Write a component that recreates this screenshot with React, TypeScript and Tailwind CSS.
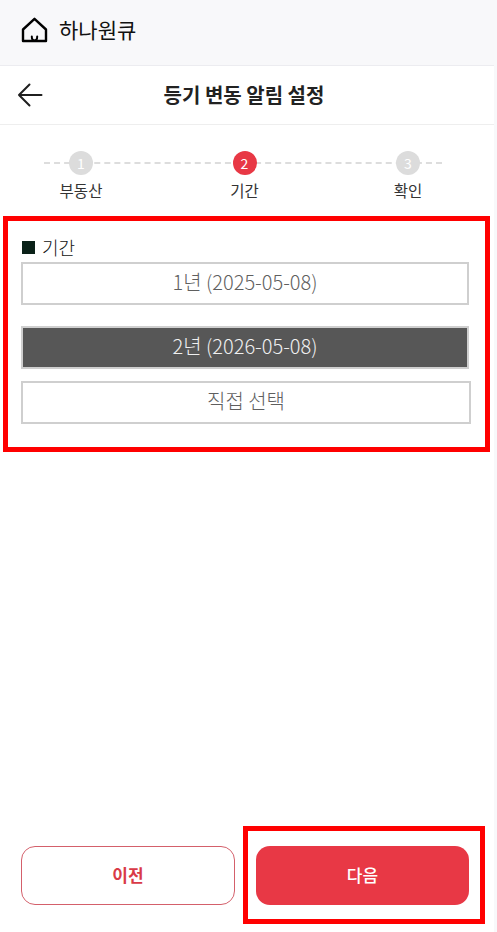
import React from 'react';

const font = 'font-["Noto_Sans_CJK_KR","Noto_Sans",sans-serif]';

function HomeIcon() {
  return (
    <svg width="27" height="26" viewBox="0 0 27 26" fill="none" stroke="#000" strokeWidth="2.4" strokeLinejoin="round" strokeLinecap="round">
      <path d="M2 12.5 13.5 1.8 25 12.5V24H2Z" />
      <path d="M10.8 19.6c0 2.4 1 4 2.7 4s2.7-1.6 2.7-4" strokeWidth="2" />
    </svg>
  );
}

function BackIcon() {
  return (
    <svg width="26" height="24" viewBox="0 0 26 24" fill="none" stroke="#1f1f1f" strokeWidth="2" strokeLinecap="round" strokeLinejoin="round">
      <path d="M24.5 12H2M12.5 1.5 2 12l10.5 10.5" />
    </svg>
  );
}

function Step({ num, label, active }: { num: number; label: string; active?: boolean }) {
  return (
    <div className="flex w-[80px] flex-col items-center">
      <div
        className={`flex h-6 w-6 items-center justify-center rounded-full text-[14px] font-normal leading-none text-white ${
          active ? 'bg-[#e83845]' : 'bg-[#dcdcdc]'
        }`}
      >
        {num}
      </div>
      <span className="mt-[3px] text-[15.5px] leading-[24px] text-[#333]">{label}</span>
    </div>
  );
}

function Choice({ label, selected, wide, className }: { label: string; selected?: boolean; wide?: boolean; className?: string }) {
  return (
    <div
      className={`flex h-[43px] items-center justify-center border-2 border-[#cfcfcf] pb-[3px] text-[20px] font-light ${
        wide ? 'w-[450px]' : 'w-[448px]'
      } ${selected ? 'bg-[#575757] text-[#f0f0f0]' : 'bg-white text-[#5f5f5f]'} ${className ?? ''}`}
    >
      {label}
    </div>
  );
}

export default function App() {
  return (
    <div className={`flex h-[932px] w-[497px] overflow-hidden bg-[#f8f8fa] ${font}`}>
      <div className="flex w-[494px] flex-col bg-white">
        <div className="flex h-[66px] items-center gap-[11px] border-b border-[#ececf0] bg-[#f8f8fa] pb-[6px] pl-[21px]">
          <HomeIcon />
          <span className="text-[21px] font-normal text-[#111]">하나원큐</span>
        </div>

        <div className="relative flex h-[59px] items-center justify-center border-b border-[#eeeeee]">
          <div className="absolute left-[17px] top-[17px]">
            <BackIcon />
          </div>
          <h1 className="pr-[6px] text-[20px] font-bold text-[#222]">등기 변동 알림 설정</h1>
        </div>

        <div className="relative mt-[26px] flex h-[65px] justify-between pl-[41px] pr-[46px]">
          <div className="absolute left-[44px] top-[11px] w-[398px] border-t-2 border-dashed border-[#dddddd]" />
          <div className="relative flex w-full justify-between">
            <Step num={1} label="부동산" />
            <Step num={2} label="기간" active />
            <Step num={3} label="확인" />
          </div>
        </div>

        <section className="ml-[3px] h-[236px] w-[487px] border-[5px] border-[#ff0000] pl-[13px] pt-[12px]">
          <div className="flex h-[28px] items-center gap-[7px] pl-[1px] text-[18px] font-light leading-none text-[#111]">
            <span className="h-[13px] w-[13px] bg-[#0a2118]" />
            기간
          </div>
          <Choice label="1년 (2025-05-08)" className="mt-[1px]" />
          <Choice label="2년 (2026-05-08)" selected className="mt-[21px]" />
          <Choice label="직접 선택" wide className="mt-[12px]" />
        </section>

        <div className="flex-1" />

        <div className="mb-[8px] ml-[21px] flex items-center">
          <button className="mr-[8px] h-[59px] w-[214px] rounded-[14px] border-[1.5px] border-[#d4606b] bg-white text-[17px] font-bold text-[#d93a47]">
            이전
          </button>
          <div className="flex h-[98px] w-[242px] items-center border-[5px] border-[#ff0000] pl-[8px]">
            <button className="h-[59px] w-[213px] rounded-[14px] bg-[#e83845] text-[17px] font-medium text-white">
              다음
            </button>
          </div>
        </div>
      </div>
    </div>
  );
}
